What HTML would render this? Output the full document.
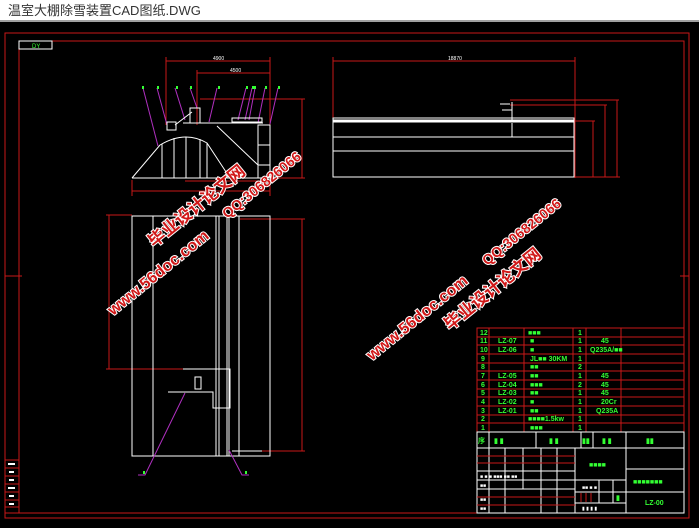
<!DOCTYPE html>
<html><head><meta charset="utf-8"><style>
html,body{margin:0;padding:0;background:#000;width:699px;height:528px;overflow:hidden}
#t{position:absolute;left:0;top:0;width:699px;height:22px;background:#fff;border-bottom:2px solid #a0a0a0;font:13px "Liberation Sans","Noto Sans CJK SC",sans-serif;color:#333;line-height:22px;padding-left:8px;box-sizing:border-box}
svg{position:absolute;left:0;top:24px}
.wm{font-family:"Liberation Sans","Noto Sans CJK SC",sans-serif;font-weight:bold;fill:#d01818;stroke:#fff;stroke-width:2;paint-order:stroke}
</style></head><body>
<div id="t">温室大棚除雪装置CAD图纸.DWG</div>
<svg width="699" height="504" viewBox="0 24 699 504">
<g fill="none" stroke="#c81818" stroke-width="1">
<rect x="5" y="33" width="684" height="485"/>
<rect x="19" y="41" width="665" height="472"/>
<line x1="5" y1="276" x2="22" y2="276"/>
<line x1="680" y1="276" x2="689" y2="276"/>
</g>
<rect x="19" y="41" width="33" height="8" fill="none" stroke="#fff"/>
<text x="32" y="48" font-size="6" fill="#3f3" font-family="Liberation Sans">DY</text>
<g stroke="#c81818" fill="none"><rect x="5" y="460" width="14" height="53"/>
<line x1="5" y1="468" x2="19" y2="468"/><line x1="5" y1="476" x2="19" y2="476"/><line x1="5" y1="484" x2="19" y2="484"/><line x1="5" y1="492" x2="19" y2="492"/><line x1="5" y1="500" x2="19" y2="500"/><line x1="5" y1="507" x2="19" y2="507"/></g>
<g fill="#fff"><rect x="8" y="463" width="7" height="2"/><rect x="9" y="471" width="5" height="2"/><rect x="9" y="479" width="5" height="2"/><rect x="8" y="487" width="7" height="2"/><rect x="9" y="495" width="5" height="2"/><rect x="9" y="503" width="5" height="2"/></g>
<g stroke="#c81818" fill="none">
<line x1="166" y1="61" x2="270" y2="61"/><line x1="166" y1="57" x2="166" y2="125"/><line x1="270" y1="57" x2="270" y2="125"/>
<line x1="197" y1="73" x2="270" y2="73"/><line x1="197" y1="70" x2="197" y2="125"/>
<line x1="200" y1="99" x2="305" y2="99"/><line x1="302" y1="99" x2="302" y2="178"/><line x1="270" y1="178" x2="305" y2="178"/>
<line x1="132" y1="191" x2="270" y2="191"/><line x1="132" y1="180" x2="132" y2="196"/><line x1="270" y1="180" x2="270" y2="196"/>
<line x1="185" y1="181" x2="270" y2="181"/>
</g>
<g fill="#fff" font-family="Liberation Sans" font-size="5"><text x="213" y="60">4900</text><text x="230" y="72">4500</text></g>
<g stroke="#b030c0" fill="none">
<path d="M143 88 L158 146"/><path d="M157 88 L167 125"/><path d="M175 88 L185 120"/><path d="M190 88 L197 108"/><path d="M217 88 L209 122"/><path d="M246 88 L238 120"/><path d="M252 88 L245 120"/><path d="M255 88 L249 120"/><path d="M265 88 L258 123"/><path d="M278 88 L270 124"/>
</g>
<g fill="#3f3"><rect x="142" y="86" width="2" height="3"/><rect x="157" y="86" width="2" height="3"/><rect x="176" y="86" width="2" height="3"/><rect x="190" y="86" width="2" height="3"/><rect x="218" y="86" width="2" height="3"/><rect x="246" y="86" width="2" height="3"/><rect x="252" y="86" width="4" height="3"/><rect x="265" y="86" width="2" height="3"/><rect x="278" y="86" width="2" height="3"/></g>
<g stroke="#fff" fill="none" stroke-width="1">
<path d="M132 178 L160 145 Q185 130 207 143 L230 178"/>
<line x1="132" y1="178" x2="270" y2="178"/>
<line x1="162" y1="144" x2="162" y2="178"/><line x1="174" y1="138" x2="174" y2="178"/><line x1="186" y1="137" x2="186" y2="178"/><line x1="200" y1="139" x2="200" y2="178"/><line x1="207" y1="143" x2="207" y2="178"/>
<line x1="183" y1="123" x2="263" y2="123"/><line x1="217" y1="126" x2="258" y2="165"/>
<rect x="258" y="125" width="12" height="53"/><line x1="258" y1="145" x2="270" y2="145"/><line x1="258" y1="165" x2="270" y2="165"/>
<rect x="167" y="122" width="9" height="8"/><rect x="190" y="108" width="10" height="15"/><line x1="175" y1="125" x2="192" y2="112"/>
<rect x="232" y="118" width="30" height="4"/>
</g>
<g stroke="#c81818" fill="none">
<line x1="333" y1="61" x2="575" y2="61"/><line x1="333" y1="57" x2="333" y2="122"/><line x1="575" y1="57" x2="575" y2="178"/>
<line x1="510" y1="100" x2="619" y2="100"/><line x1="617" y1="100" x2="617" y2="177"/>
<line x1="510" y1="105" x2="607" y2="105"/><line x1="605" y1="105" x2="605" y2="177"/>
<line x1="575" y1="121" x2="595" y2="121"/><line x1="593" y1="121" x2="593" y2="177"/>
<line x1="575" y1="177" x2="620" y2="177"/>
</g>
<g fill="#fff" font-family="Liberation Sans" font-size="5"><text x="448" y="60">18870</text></g>
<g stroke="#fff" fill="none">
<rect x="333" y="118" width="241" height="59"/><rect x="334" y="120" width="239" height="2" fill="#fff"/>
<line x1="333" y1="137" x2="574" y2="137"/><line x1="333" y1="151" x2="574" y2="151"/>
<line x1="512" y1="102" x2="512" y2="120"/><line x1="500" y1="104" x2="510" y2="104"/><line x1="502" y1="110" x2="512" y2="110"/><line x1="512" y1="123" x2="512" y2="137"/>
</g>
<g stroke="#c81818" fill="none">
<line x1="106" y1="215" x2="132" y2="215"/><line x1="109" y1="215" x2="109" y2="369"/><line x1="106" y1="369" x2="185" y2="369"/>
<line x1="240" y1="219" x2="305" y2="219"/><line x1="302" y1="219" x2="302" y2="451"/><line x1="232" y1="451" x2="305" y2="451"/>
</g>
<g stroke="#fff" fill="none">
<rect x="132" y="216" width="138" height="240"/>
<line x1="153" y1="216" x2="153" y2="456"/><line x1="216" y1="216" x2="216" y2="456"/><line x1="219" y1="216" x2="219" y2="456"/><line x1="227" y1="216" x2="227" y2="456"/><line x1="229" y1="216" x2="229" y2="456"/><line x1="239" y1="216" x2="239" y2="456"/>
<path d="M183 369 L230 369 L230 408 L213 408 L213 392 L168 392"/>
<rect x="195" y="377" width="6" height="12"/><line x1="232" y1="451" x2="262" y2="451"/>
</g>
<g stroke="#b030c0" fill="none"><path d="M185 393 L145 475 L138 475"/><path d="M229 450 L242 475 L249 475"/></g>
<g fill="#3f3"><rect x="143" y="471" width="2" height="3"/><rect x="245" y="471" width="2" height="3"/></g>
<g stroke="#c81818" fill="none">
<rect x="477" y="328" width="207" height="104"/>
<line x1="477" y1="337" x2="684" y2="337"/><line x1="477" y1="345" x2="684" y2="345"/><line x1="477" y1="354" x2="684" y2="354"/><line x1="477" y1="363" x2="684" y2="363"/><line x1="477" y1="371" x2="684" y2="371"/><line x1="477" y1="380" x2="684" y2="380"/><line x1="477" y1="389" x2="684" y2="389"/><line x1="477" y1="397" x2="684" y2="397"/><line x1="477" y1="406" x2="684" y2="406"/><line x1="477" y1="415" x2="684" y2="415"/><line x1="477" y1="423" x2="684" y2="423"/>
<line x1="489" y1="328" x2="489" y2="432"/><line x1="524" y1="328" x2="524" y2="432"/><line x1="573" y1="328" x2="573" y2="432"/><line x1="586" y1="328" x2="586" y2="432"/><line x1="621" y1="328" x2="621" y2="432"/>
</g>
<g fill="#3f3" font-family="Liberation Sans" font-size="7" font-weight="bold">
<text x="480" y="335">12</text><text x="480" y="343">11</text><text x="480" y="352">10</text><text x="481" y="361">9</text><text x="481" y="369">8</text><text x="481" y="378">7</text><text x="481" y="387">6</text><text x="481" y="395">5</text><text x="481" y="404">4</text><text x="481" y="413">3</text><text x="481" y="421">2</text><text x="481" y="430">1</text>
<text x="498" y="343">LZ-07</text><text x="498" y="352">LZ-06</text><text x="498" y="378">LZ-05</text><text x="498" y="387">LZ-04</text><text x="498" y="395">LZ-03</text><text x="498" y="404">LZ-02</text><text x="498" y="413">LZ-01</text>
<text x="528" y="335">■■■</text><text x="530" y="343">■</text><text x="530" y="352">■</text><text x="530" y="361">JL■■ 30KM</text><text x="530" y="369">■■</text><text x="530" y="378">■■</text><text x="530" y="387">■■■</text><text x="530" y="395">■■</text><text x="530" y="404">■</text><text x="530" y="413">■■</text><text x="528" y="421">■■■■1.5kw</text><text x="530" y="430">■■■</text>
<text x="578" y="335">1</text><text x="578" y="343">1</text><text x="578" y="352">1</text><text x="578" y="361">1</text><text x="578" y="369">2</text><text x="578" y="378">1</text><text x="578" y="387">2</text><text x="578" y="395">1</text><text x="578" y="404">1</text><text x="578" y="413">1</text><text x="578" y="421">1</text><text x="578" y="430">1</text>
<text x="601" y="343">45</text><text x="590" y="352">Q235A/■■</text><text x="601" y="378">45</text><text x="601" y="387">45</text><text x="601" y="395">45</text><text x="601" y="404">20Cr</text><text x="596" y="413">Q235A</text>
</g>
<g stroke="#fff" fill="none">
<rect x="477" y="432" width="207" height="81"/>
<line x1="477" y1="448" x2="684" y2="448"/>
<line x1="489" y1="432" x2="489" y2="448"/><line x1="536" y1="432" x2="536" y2="448"/><line x1="581" y1="432" x2="581" y2="448"/><line x1="593" y1="432" x2="593" y2="448"/><line x1="626" y1="432" x2="626" y2="448"/>
<line x1="575" y1="448" x2="575" y2="513"/><line x1="626" y1="448" x2="626" y2="513"/>
<line x1="626" y1="469" x2="684" y2="469"/><line x1="626" y1="492" x2="684" y2="492"/>
<line x1="575" y1="480" x2="626" y2="480"/><line x1="575" y1="492" x2="626" y2="492"/><line x1="575" y1="503" x2="626" y2="503"/>
<line x1="477" y1="471" x2="575" y2="471"/><line x1="477" y1="480" x2="575" y2="480"/><line x1="477" y1="489" x2="575" y2="489"/>
<line x1="489" y1="448" x2="489" y2="513"/><line x1="505" y1="448" x2="505" y2="480"/><line x1="523" y1="448" x2="523" y2="480"/><line x1="541" y1="448" x2="541" y2="513"/><line x1="557" y1="448" x2="557" y2="513"/>
<line x1="599" y1="480" x2="599" y2="503"/><line x1="613" y1="480" x2="613" y2="503"/>
<line x1="505" y1="480" x2="505" y2="513"/><line x1="523" y1="480" x2="523" y2="489"/>
</g>
<g stroke="#c81818"><line x1="477" y1="456" x2="575" y2="456"/><line x1="477" y1="463" x2="575" y2="463"/><line x1="477" y1="497" x2="575" y2="497"/><line x1="477" y1="505" x2="575" y2="505"/><line x1="581" y1="493" x2="581" y2="502"/><line x1="586" y1="493" x2="586" y2="502"/><line x1="591" y1="493" x2="591" y2="502"/></g>
<g fill="#3f3" font-family="Liberation Sans,Noto Sans CJK SC" font-size="7" font-weight="bold">
<text x="478" y="443">序</text><text x="494" y="443">▮ ▮</text><text x="549" y="443">▮ ▮</text><text x="582" y="443">▮▮</text><text x="602" y="443">▮ ▮</text><text x="646" y="443">▮▮</text>
<text x="589" y="467">■■■■</text><text x="633" y="484">■■■■■■■</text><text x="645" y="505">LZ-00</text><text x="616" y="500">▮</text>
</g>
<g fill="#fff" font-size="5" font-family="Liberation Sans"><text x="480" y="478">■ ■ ■ ■■■ ■■ ■■</text><text x="582" y="489">■■  ■ ■</text><text x="582" y="510">▮ ▮  ▮ ▮</text><text x="480" y="487">■■</text><text x="480" y="501">■■</text><text x="480" y="510">■■</text></g>
<g class="wm">
<g transform="translate(113,316) rotate(-39)"><text font-size="16" x="0" y="0">www.56doc.com</text></g>
<g transform="translate(154,248) rotate(-39)"><text font-size="17" x="0" y="0">毕业设计论文网</text></g>
<g transform="translate(227,219) rotate(-39)"><text font-size="14" x="0" y="0">QQ:306826066</text></g>
<g transform="translate(372,361) rotate(-39)"><text font-size="16" x="0" y="0">www.56doc.com</text></g>
<g transform="translate(450,331) rotate(-39)"><text font-size="17" x="0" y="0">毕业设计论文网</text></g>
<g transform="translate(487,266) rotate(-39)"><text font-size="14" x="0" y="0">QQ:306826066</text></g>
</g>
</svg>
</body></html>
